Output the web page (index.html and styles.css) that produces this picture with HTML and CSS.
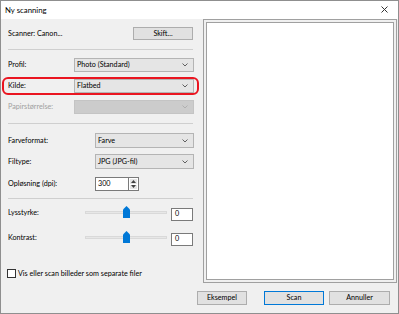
FILE: index.html
```html
<!DOCTYPE html>
<html>
<head>
<meta charset="utf-8">
<link rel="stylesheet" href="styles.css">
</head>
<body>
<div class="window">
  <div class="titlebar">
    <span class="title">Ny scanning</span>
    <svg class="close" width="7" height="7" viewBox="0 0 7 7"><path d="M0.5 0.5 L6.5 6.5 M6.5 0.5 L0.5 6.5" stroke="#333" stroke-width="1"/></svg>
  </div>
  <div class="content">
    <div class="main">
      <div class="left">
        <div class="row r-scanner">
          <span class="label">Scanner: Canon...</span>
          <div class="btn btn-skift">Skift...</div>
        </div>
        <div class="sep s1"></div>
        <div class="row r-profil">
          <span class="label lw1">Profil:</span>
          <div class="dd dd-wide"><span>Photo (Standard)</span><svg class="chev" width="6" height="4" viewBox="0 0 6 4"><path d="M0.5 0.5 L3 3 L5.5 0.5" fill="none" stroke="#606060" stroke-width="1"/></svg></div>
        </div>
        <div class="hl">
          <div class="row">
            <span class="label lw1h">Kilde:</span>
            <div class="dd dd-wide"><span>Flatbed</span><svg class="chev" width="6" height="4" viewBox="0 0 6 4"><path d="M0.5 0.5 L3 3 L5.5 0.5" fill="none" stroke="#606060" stroke-width="1"/></svg></div>
          </div>
        </div>
        <div class="row r-papir">
          <span class="label lw1 disabled">Papirstørrelse:</span>
          <div class="dd dd-wide dd-dis"><span></span><svg class="chev" width="6" height="4" viewBox="0 0 6 4"><path d="M0.5 0.5 L3 3 L5.5 0.5" fill="none" stroke="#b0b0b0" stroke-width="1"/></svg></div>
        </div>
        <div class="sep s2"></div>
        <div class="row r-farve">
          <span class="label lw2">Farveformat:</span>
          <div class="dd dd-narrow"><span>Farve</span><svg class="chev" width="6" height="4" viewBox="0 0 6 4"><path d="M0.5 0.5 L3 3 L5.5 0.5" fill="none" stroke="#606060" stroke-width="1"/></svg></div>
        </div>
        <div class="row r-fil">
          <span class="label lw2">Filtype:</span>
          <div class="dd dd-narrow"><span>JPG (JPG-fil)</span><svg class="chev" width="6" height="4" viewBox="0 0 6 4"><path d="M0.5 0.5 L3 3 L5.5 0.5" fill="none" stroke="#606060" stroke-width="1"/></svg></div>
        </div>
        <div class="row r-opl">
          <span class="label lw2">Opløsning (dpi):</span>
          <div class="spin">
            <div class="spin-input">300</div>
            <div class="spin-btns">
              <div class="spin-b"><svg width="5" height="3" viewBox="0 0 5 3"><path d="M0 3 L2.5 0 L5 3 Z" fill="#404040"/></svg></div>
              <div class="spin-b"><svg width="5" height="3" viewBox="0 0 5 3"><path d="M0 0 L2.5 3 L5 0 Z" fill="#404040"/></svg></div>
            </div>
          </div>
        </div>
        <div class="sep s3"></div>
        <div class="row r-lys">
          <span class="label lw3">Lysstyrke:</span>
          <div class="slider">
            <div class="track"></div>
            <svg class="thumb" width="7" height="12" viewBox="0 0 7 12"><path d="M0 3.5 L3.5 0 L7 3.5 L7 12 L0 12 Z" fill="#0078d7"/></svg>
          </div>
          <div class="val">0</div>
        </div>
        <div class="row r-kon">
          <span class="label lw3">Kontrast:</span>
          <div class="slider">
            <div class="track"></div>
            <svg class="thumb" width="7" height="12" viewBox="0 0 7 12"><path d="M0 3.5 L3.5 0 L7 3.5 L7 12 L0 12 Z" fill="#0078d7"/></svg>
          </div>
          <div class="val">0</div>
        </div>
        <div class="row r-chk">
          <div class="chk"></div>
          <span class="label">Vis eller scan billeder som separate filer</span>
        </div>
      </div>
      <div class="right">
        <div class="frame">
          <div class="preview"></div>
        </div>
      </div>
    </div>
    <div class="buttons">
      <div class="btn b-eks">Eksempel</div>
      <div class="btn b-scan">Scan</div>
      <div class="btn b-ann">Annuller</div>
    </div>
  </div>
</div>
</body>
</html>
```

FILE: styles.css
```css
* { box-sizing: border-box; }
html, body { margin: 0; padding: 0; }
body {
  width: 399px;
  height: 314px;
  overflow: hidden;
  font-family: Lato, "Noto Sans", sans-serif;
  font-size: 7.2px;
  color: #000;
  background: #fff;
}
.window {
  width: 399px;
  height: 314px;
  border: 1px solid #8f8f8f;
  display: flex;
  flex-direction: column;
  background: #f0f0f0;
}
.titlebar {
  height: 18px;
  background: #fff;
  display: flex;
  align-items: center;
  justify-content: space-between;
  padding: 0 10px 1px 4px;
  flex: none;
}
.title { font-size: 7.8px; }
.close { display: block; }
.content {
  flex: 1;
  display: flex;
  flex-direction: column;
}
.main {
  display: flex;
  height: 264px;
}
.left {
  width: 202px;
  padding: 0 9px 0 7px;
  display: flex;
  flex-direction: column;
}
.row {
  display: flex;
  align-items: center;
}
.label { white-space: nowrap; line-height: 1; }
.disabled { color: #a0a0a0; }
.lw1 { width: 66px; flex: none; }
.lw1h { width: 66px; flex: none; }
.lw2 { width: 87px; flex: none; }
.lw3 { width: 77px; flex: none; }
.r-scanner { margin-top: 8px; height: 13px; justify-content: space-between; }
.btn {
  background: #e1e1e1;
  border: 1px solid #adadad;
  display: flex;
  align-items: center;
  justify-content: center;
  line-height: 1;
}
.btn-skift { width: 60px; height: 13px; margin-right: 1px; }
.sep { height: 1px; background: #cfcfcf; margin-right: 1px; }
.s1 { margin-top: 9px; }
.r-profil { margin-top: 8px; height: 14px; }
.hl {
  margin: 5px -5px 0 -6px;
  height: 18px;
  border: 2px solid #ea1520;
  border-radius: 6px;
  padding: 0 3px 0 4px;
}
.hl .row { height: 14px; }
.r-papir { margin-top: 5px; height: 14px; }
.s2 { margin-top: 9px; }
.r-farve { margin-top: 9px; height: 15px; }
.r-fil { margin-top: 6px; height: 15px; }
.r-opl { margin-top: 8px; height: 14px; }
.s3 { margin-top: 7px; }
.dd {
  height: 100%;
  flex: 1;
  background: #e5e5e5;
  border: 1px solid #b4b4b4;
  display: flex;
  align-items: center;
  justify-content: space-between;
  padding: 0 5px 0 2px;
  line-height: 1;
}
.dd-dis { background: #cccccc; border-color: #c4c4c4; }
.chev { display: block; }
.spin { display: flex; height: 14px; }
.spin-input {
  width: 33px;
  height: 14px;
  background: #fff;
  border: 1px solid #7a7a7a;
  border-right: none;
  display: flex;
  align-items: center;
  padding-left: 2px;
  line-height: 1;
}
.spin-btns {
  width: 11px;
  height: 14px;
  border: 1px solid #7a7a7a;
  background: #fff;
  display: flex;
  flex-direction: column;
  padding: 1px;
  gap: 1px;
}
.spin-b {
  flex: 1;
  background: #e5e5e5;
  display: flex;
  align-items: center;
  justify-content: center;
}
.spin-b svg { display: block; }
.r-lys { margin-top: 7px; height: 14px; }
.r-kon { margin-top: 11px; height: 14px; }
.slider {
  position: relative;
  width: 82px;
  height: 14px;
  flex: none;
}
.track {
  position: absolute;
  left: 0; right: 0;
  top: 5px;
  height: 3px;
  background: #e7e7e7;
  border: 1px solid #d9d9d9;
}
.thumb { position: absolute; left: 38px; top: 0; display: block; }
.val {
  margin-left: 4px;
  width: 22px;
  height: 13px;
  margin-top: 2px;
  background: #fff;
  border: 1px solid #7a7a7a;
  display: flex;
  align-items: center;
  padding-left: 3px;
  line-height: 1;
}
.r-chk { margin-top: 24px; height: 9px; }
.chk {
  width: 9px;
  height: 9px;
  border: 1px solid #333;
  background: #fff;
  margin-right: 2px;
  margin-left: -1px;
}
.right {
  flex: 1;
  display: flex;
  flex-direction: column;
}
.frame {
  height: 264px;
  margin-right: 1px;
  border: 1px solid #a0a0a0;
  padding: 2px;
}
.preview {
  height: 100%;
  background: #fff;
  border: 1px solid #a0a0a0;
}
.buttons {
  margin-top: 8px;
  display: flex;
  justify-content: flex-end;
  padding-right: 8px;
}
.buttons .btn { height: 14px; }
.b-eks { width: 50px; }
.b-scan { width: 60px; margin-left: 17px; border-color: #0078d7; }
.b-ann { width: 61px; margin-left: 5px; }
```
